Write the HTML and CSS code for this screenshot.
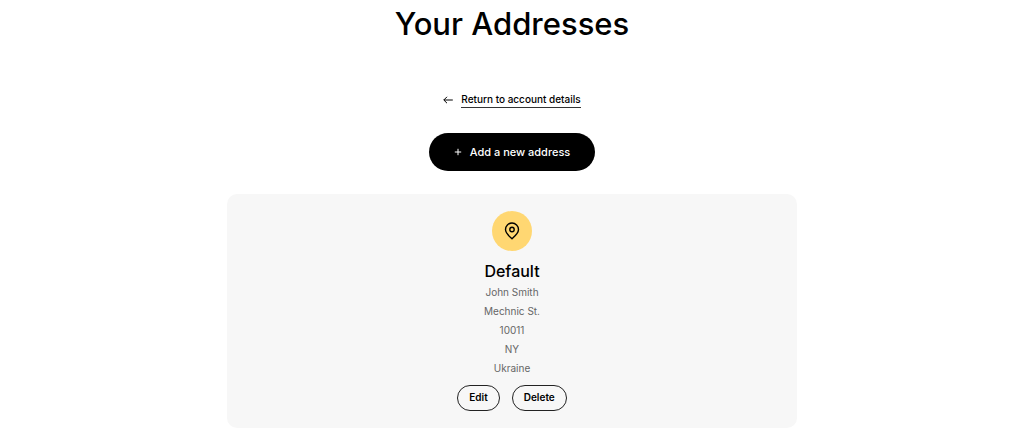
FILE: index.html
```html
<!DOCTYPE html>
<html lang="en">
<head>
<meta charset="utf-8">
<meta name="viewport" content="width=device-width, initial-scale=1">
<title>Your Addresses</title>
<link rel="stylesheet" href="styles.css">
</head>
<body>
<main class="page">
  <h1 class="title">Your Addresses</h1>
  <a class="back" href="#account">
    <svg class="back-icon" viewBox="0 0 10 10" aria-hidden="true"><path d="M9.800 5H.8M4 1.800.8 5 4 8.200"/></svg>
    <span class="back-label">Return to account details</span>
  </a>
  <button class="add" type="button">
    <svg class="add-icon" viewBox="0 0 8 8" aria-hidden="true"><path d="M4 .8v6.400M.8 4h6.400"/></svg>
    Add a new address
  </button>
  <section class="card">
    <div class="badge">
      <svg class="pin" viewBox="0 0 20 20" aria-hidden="true"><path d="M10 17.700C7.500 15.500 3.500 12.300 3.500 8.500a6.500 6.500 0 0 1 13 0c0 3.800-4 7-6.500 9.200Z"/><circle cx="10" cy="8.500" r="2.200"/></svg>
    </div>
    <h2 class="name">Default</h2>
    <address class="lines">
      <span>John Smith</span>
      <span>Mechnic St.</span>
      <span>10011</span>
      <span>NY</span>
      <span>Ukraine</span>
    </address>
    <div class="actions">
      <button class="action" type="button">Edit</button>
      <button class="action" type="button">Delete</button>
    </div>
  </section>
</main>
</body>
</html>
```

FILE: styles.css
```css
* { box-sizing: border-box; }
body {
  margin: 0;
  background: #fff;
  color: #000;
  font-family: Inter, "Liberation Sans", sans-serif;
}
svg { fill: none; stroke: currentColor; flex: none; }
.page {
  display: flex;
  flex-direction: column;
  align-items: center;
  padding: 4px 16px 11px;
}
.title {
  margin: 0 0 48px;
  font-size: 31px;
  line-height: 40px;
  font-weight: 500;
}
.back {
  display: flex;
  align-items: center;
  gap: 8px;
  margin-bottom: 25px;
  color: #000;
  font-size: 10px;
  line-height: 14px;
  font-weight: 500;
  text-decoration: none;
}
.back-icon { width: 10px; height: 10px; }
.back-label { padding-bottom: 1px; border-bottom: 1px solid #333; }
.add {
  display: flex;
  align-items: center;
  gap: 8px;
  height: 38px;
  margin-bottom: 23px;
  padding: 0 25px;
  border: 0;
  border-radius: 19px;
  background: #000;
  color: #fff;
  font: inherit;
  font-size: 11px;
  font-weight: 500;
}
.add-icon { width: 8px; height: 8px; }
.card {
  display: flex;
  flex-direction: column;
  align-items: center;
  width: 100%;
  max-width: 570px;
  padding: 17px;
  border-radius: 10px;
  background: #f7f7f7;
}
.badge {
  display: grid;
  place-items: center;
  width: 40px;
  height: 40px;
  border-radius: 50%;
  background: #ffd772;
}
.pin { width: 20px; height: 20px; stroke-width: 1.400; }
.name {
  margin: 10px 0 2px;
  font-size: 16px;
  line-height: 20px;
  font-weight: 500;
}
.lines {
  display: flex;
  flex-direction: column;
  align-items: center;
  margin-bottom: 7px;
  color: #666;
  font-size: 10px;
  line-height: 19px;
  font-style: normal;
}
.actions { display: flex; gap: 12px; }
.action {
  height: 26px;
  padding: 0 11px 2px;
  border: 1px solid #222;
  border-radius: 13px;
  background: transparent;
  color: #000;
  font: inherit;
  font-size: 10px;
  font-weight: 600;
}
```
